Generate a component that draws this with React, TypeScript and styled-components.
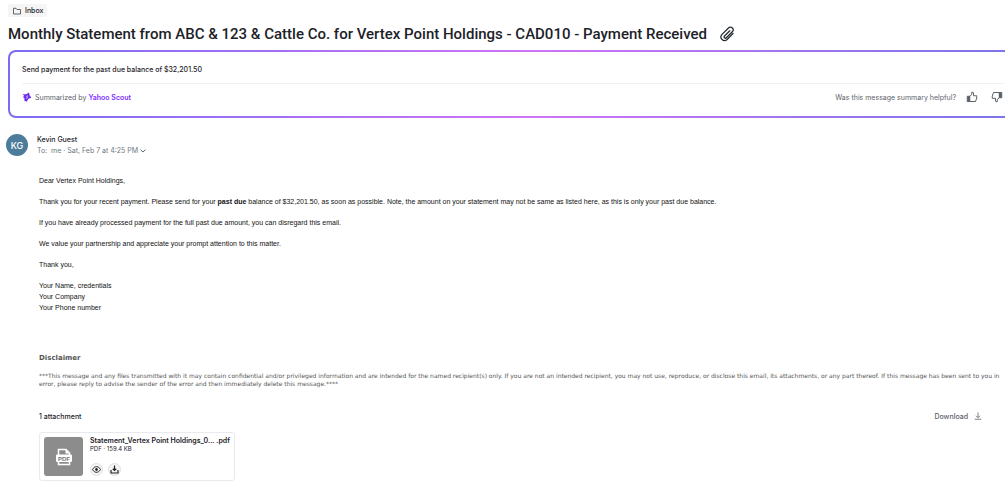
import React from "react";
import styled, { createGlobalStyle } from "styled-components";

const GlobalStyle = createGlobalStyle`
  * { box-sizing: border-box; }
  body { margin: 0; background: #fff; color: #1d2228; font-family: Inter, "Liberation Sans", sans-serif; overflow-x: hidden; }
  h1, h2, p { margin: 0; }
  button { font: inherit; color: inherit; background: none; border: 0; padding: 0; cursor: pointer; }
  svg { display: block; flex: none; }
`;

const Page = styled.main`
  padding: 4px 0 16px;
  overflow: hidden;
`;

const FolderChip = styled.button`
  display: flex;
  align-items: center;
  gap: 4px;
  height: 13px;
  margin-left: 8px;
  padding: 0 4px 0 5px;
  border-radius: 2px;
  background: #f5f5f6;
  font-size: 7px;
  font-weight: 500;
`;

const Subject = styled.h1`
  display: flex;
  align-items: center;
  gap: 12px;
  margin: 7px 0 6px 8px;
  font-family: Roboto, "Liberation Sans", sans-serif;
  font-size: 15px;
  line-height: 20px;
  font-weight: 500;
  white-space: nowrap;
`;

const Summary = styled.section`
  height: 68px;
  margin: 0 -14px 0 8px;
  padding: 12px 14px 0 12px;
  border: 2px solid transparent;
  border-radius: 8px;
  background:
    linear-gradient(#fff, #fff) padding-box,
    linear-gradient(90deg, #7a6cf2, #cf74f4 52%, #7a74ea) border-box;
`;

const SummaryText = styled.p`
  padding-bottom: 7px;
  border-bottom: 1px solid #f0f1f3;
  font-size: 7px;
  line-height: 12px;
  font-weight: 500;
`;

const SummaryFooter = styled.div`
  display: flex;
  align-items: center;
  justify-content: space-between;
  height: 26px;
  font-size: 7px;
  color: #5b636a;
`;

const Group = styled.div<{ $gap: number }>`
  display: flex;
  align-items: center;
  gap: ${(p) => p.$gap}px;
`;

const ScoutLink = styled.a`
  color: #7d2eff;
  font-weight: 600;
  text-decoration: none;
`;

const Sender = styled.header`
  display: flex;
  align-items: center;
  gap: 9px;
  margin: 16px 0 0 6px;
`;

const Avatar = styled.div`
  display: grid;
  place-items: center;
  width: 22px;
  height: 22px;
  border-radius: 50%;
  background: #4c7b9b;
  color: #fff;
  font-size: 9px;
  font-weight: 500;
`;

const SenderName = styled.p`
  font-size: 7px;
  line-height: 11px;
  font-weight: 500;
`;

const Details = styled.button`
  display: flex;
  align-items: center;
  gap: 2px;
  font-size: 7px;
  line-height: 11px;
  color: #6e7780;
`;

const Content = styled.div`
  padding: 0 16px 0 39px;
`;

const Letter = styled.div`
  display: flex;
  flex-direction: column;
  gap: 10px;
  margin-top: 19px;
  font-family: "Liberation Sans", Arial, sans-serif;
  font-size: 7px;
  line-height: 11px;
  color: #111;
`;

const Disclaimer = styled.section`
  margin: 40px -16px 0 0;
  font-family: "DejaVu Sans", Verdana, sans-serif;
  font-size: 6px;
  line-height: 8px;
  color: #555;
`;

const DisclaimerTitle = styled.h2`
  margin-bottom: 8px;
  font-size: 7px;
  line-height: 11px;
`;

const AttachmentBar = styled.div`
  display: flex;
  align-items: center;
  justify-content: space-between;
  height: 12px;
  margin: 22px 7px 10px 0;
  font-size: 7px;
  font-weight: 500;
`;

const AttachmentTitle = styled.h2`
  font-size: 7px;
  font-weight: 500;
`;

const DownloadAll = styled.button`
  display: flex;
  align-items: center;
  gap: 6px;
  color: #5b636a;
`;

const FileCard = styled.article`
  display: inline-flex;
  gap: 7px;
  padding: 4px;
  border: 1px solid #e8eaed;
  border-radius: 3px;
`;

const Thumb = styled.div`
  display: grid;
  place-items: center;
  width: 39px;
  height: 39px;
  border-radius: 3px;
  background: #8c8c8c;
`;

const FileInfo = styled.div`
  display: flex;
  flex-direction: column;
  font-size: 6px;
  line-height: 8px;
`;

const FileName = styled.p`
  font-size: 7px;
  font-weight: 600;
`;

const FileActions = styled.div`
  display: flex;
  gap: 5px;
  margin-top: auto;
`;

const RoundButton = styled.button`
  display: grid;
  place-items: center;
  width: 13px;
  height: 13px;
  border: 1px solid #e0e0e0;
  border-radius: 50%;
  background: #f5f5f5;
`;

const FolderIcon = () => (
  <svg width="8" height="8" viewBox="0 0 16 16" fill="none" stroke="#3b4248" strokeWidth="1.6" strokeLinejoin="round">
    <path d="M1 2.5h5l2 2.5h7v9H1z" />
  </svg>
);

const ClipIcon = () => (
  <svg width="16" height="16" viewBox="0 0 24 24" fill="none" stroke="#232a31" strokeWidth="1.900" strokeLinecap="round">
    <path d="M16.200 7.200 8.300 15a1.900 1.900 0 0 0 2.700 2.700l9-9a4.100 4.100 0 0 0-5.800-5.800L4.200 12.900a5.400 5.400 0 0 0 7.600 7.600L21 11.300" />
  </svg>
);

const ScoutIcon = () => (
  <svg width="10" height="10" viewBox="0 0 20 20">
    <path d="M1 4.500 8.500 4.500 14 1l1 5.500 4 5-5.500 1.500L9 19.500 4.500 17l.5-4.500L1.500 10 5 8z" fill="#6b2bea" />
    <path d="m11 6.500-2 3h2.500l-3 4.500" fill="none" stroke="#fff" strokeWidth="1.200" />
  </svg>
);

const ThumbIcon = ({ down = false }: { down?: boolean }) => (
  <svg width="12" height="12" viewBox="0 0 24 24" fill="none" stroke="#5b636a" strokeWidth="2" strokeLinejoin="round">
    <g transform={down ? "rotate(180 12 12)" : undefined}>
      <path d="M2.500 10.500h5v10.500h-5z" fill="#5b636a" />
      <path d="M7 11 11.500 7V2.500h2.500l1 1.500v5.500h6.500V14L19 21H7z" />
    </g>
  </svg>
);

const ChevronIcon = () => (
  <svg width="6" height="6" viewBox="0 0 12 12" fill="none" stroke="#5b636a" strokeWidth="2">
    <path d="m1 3.500 5 4.500 5-4.500" />
  </svg>
);

const DownloadIcon = () => (
  <svg width="8" height="8" viewBox="0 0 16 16" fill="none" stroke="#5b636a" strokeWidth="1.600">
    <path d="M8 1v10M4 7.500l4 4 4-4M1.500 14.500h13" />
  </svg>
);

const TrayIcon = () => (
  <svg width="9" height="9" viewBox="0 0 18 18" fill="none" stroke="#1d2228" strokeWidth="2.400">
    <path d="M9 1v10M5.500 7.500 9 11l3.500-3.500M2 10v6h14v-6" />
  </svg>
);

const EyeIcon = () => (
  <svg width="9" height="9" viewBox="0 0 18 18" fill="none" stroke="#1d2228" strokeWidth="2">
    <path d="M1 9c4-7.500 12-7.500 16 0-4 7.500-12 7.500-16 0z" />
    <circle cx="9" cy="9" r="2" fill="#1d2228" />
  </svg>
);

const PdfIcon = () => (
  <svg width="18" height="18" viewBox="0 0 36 36">
    <path d="M7 14V3h15l7 7v4M7 28v5h22v-5" fill="none" stroke="#fff" strokeWidth="3" />
    <path d="M21 3v8h8z" fill="#fff" />
    <rect x="2" y="13" width="32" height="15" rx="2" fill="#fff" />
    <text x="18" y="25" textAnchor="middle" fontFamily="Liberation Sans, sans-serif" fontWeight="700" fontSize="12" fill="#777">PDF</text>
  </svg>
);

export default function App() {
  return (
    <Page>
      <GlobalStyle />
      <FolderChip><FolderIcon />Inbox</FolderChip>
      <Subject>
        Monthly Statement from ABC &amp; 123 &amp; Cattle Co. for Vertex Point Holdings - CAD010 - Payment Received
        <ClipIcon />
      </Subject>
      <Summary>
        <SummaryText>Send payment for the past due balance of $32,201.50</SummaryText>
        <SummaryFooter>
          <Group $gap={3}>
            <ScoutIcon />
            <span>Summarized by <ScoutLink href="#scout">Yahoo Scout</ScoutLink></span>
          </Group>
          <Group $gap={13}>
            <Group $gap={10}>
              <span>Was this message summary helpful?</span>
              <button aria-label="Helpful"><ThumbIcon /></button>
            </Group>
            <button aria-label="Not helpful"><ThumbIcon down /></button>
          </Group>
        </SummaryFooter>
      </Summary>
      <Sender>
        <Avatar>KG</Avatar>
        <div>
          <SenderName>Kevin Guest</SenderName>
          <Details>To:&nbsp; me · Sat, Feb 7 at 4:25 PM <ChevronIcon /></Details>
        </div>
      </Sender>
      <Content>
        <Letter>
          <p>Dear Vertex Point Holdings,</p>
          <p>
            Thank you for your recent payment. Please send for your <b>past due</b> balance of $32,201.50, as soon as
            possible. Note, the amount on your statement may not be same as listed here, as this is only your past due
            balance.
          </p>
          <p>If you have already processed payment for the full past due amount, you can disregard this email.</p>
          <p>We value your partnership and appreciate your prompt attention to this matter.</p>
          <p>Thank you,</p>
          <p>
            Your Name, credentials<br />
            Your Company<br />
            Your Phone number
          </p>
        </Letter>
        <Disclaimer>
          <DisclaimerTitle>Disclaimer</DisclaimerTitle>
          <p>
            ***This message and any files transmitted with it may contain confidential and/or privileged information and
            are intended for the named recipient(s) only. If you are not an intended recipient, you may not use,
            reproduce, or disclose this email, its attachments, or any part thereof. If this message has been sent to
            you in error, please reply to advise the sender of the error and then immediately delete this message.****
          </p>
        </Disclaimer>
        <AttachmentBar>
          <AttachmentTitle>1 attachment</AttachmentTitle>
          <DownloadAll>Download <DownloadIcon /></DownloadAll>
        </AttachmentBar>
        <FileCard>
          <Thumb><PdfIcon /></Thumb>
          <FileInfo>
            <FileName>Statement_Vertex Point Holdings_0... .pdf</FileName>
            <p>PDF · 159.4 KB</p>
            <FileActions>
              <RoundButton aria-label="Preview"><EyeIcon /></RoundButton>
              <RoundButton aria-label="Download file"><TrayIcon /></RoundButton>
            </FileActions>
          </FileInfo>
        </FileCard>
      </Content>
    </Page>
  );
}
